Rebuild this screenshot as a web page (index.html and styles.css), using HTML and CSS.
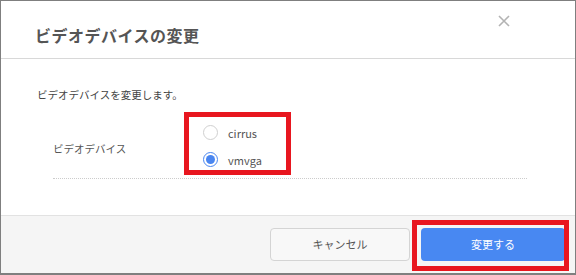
FILE: index.html
```html
<!DOCTYPE html>
<html lang="ja">
<head>
    <meta charset="UTF-8">
    <title>ビデオデバイスの変更</title>
    <link rel="stylesheet" href="styles.css">
</head>
<body>
    <div class="dialog">
        <div class="dialog-header">
            <h1>ビデオデバイスの変更</h1>
            <svg class="close" width="12" height="12" viewBox="0 0 12 12">
                <path d="M1 1 L11 11 M11 1 L1 11" stroke="#b3b3b3" stroke-width="1.6" fill="none"/>
            </svg>
        </div>

        <div class="dialog-body">
            <p class="description">ビデオデバイスを変更します。</p>
            <div class="form-row">
                <div class="form-label">ビデオデバイス</div>
                <div class="radio-group">
                    <label class="radio"><span class="radio-mark"></span>cirrus</label>
                    <label class="radio checked"><span class="radio-mark"></span>vmvga</label>
                    <div class="highlight highlight-radio"></div>
                </div>
            </div>
        </div>

        <div class="dialog-footer">
            <button class="btn btn-cancel">キャンセル</button>
            <div class="btn-wrap">
                <button class="btn btn-primary">変更する</button>
                <div class="highlight highlight-btn"></div>
            </div>
        </div>
    </div>
</body>
</html>
```

FILE: styles.css
```css
* {
    margin: 0;
    padding: 0;
    box-sizing: border-box;
    font-family: 'Noto Sans CJK JP', 'Noto Sans', sans-serif;
}

body {
    background: white;
}

.dialog {
    width: 576px;
    height: 275px;
    border: 1px solid #7f7f7f;
    border-bottom-width: 2px;
    display: flex;
    flex-direction: column;
    background: white;
}

.dialog-header {
    position: relative;
    height: 58px;
    border-bottom: 1px solid #d8d8d8;
    display: flex;
    align-items: center;
    padding-left: 34px;
    padding-top: 10px;
}

.dialog-header h1 {
    font-size: 16px;
    font-weight: bold;
    color: #555;
    letter-spacing: 0.5px;
}

.close {
    position: absolute;
    top: 14px;
    right: 65px;
}

.dialog-body {
    flex: 1;
    padding: 28px 48px 0 36px;
}

.description {
    font-size: 10.5px;
    line-height: 16px;
    color: #444;
}

.form-row {
    display: flex;
    align-items: center;
    margin: 15px 0 0 16px;
    height: 61px;
    border-bottom: 1px dotted #ccc;
}

.form-label {
    width: 150px;
    font-size: 10.5px;
    color: #555;
}

.radio-group {
    position: relative;
    display: flex;
    flex-direction: column;
    gap: 11px;
    padding-bottom: 4px;
}

.radio {
    display: flex;
    align-items: center;
    gap: 10px;
    height: 16px;
    font-size: 11px;
    color: #555;
}

.radio-mark {
    width: 15px;
    height: 15px;
    border: 1px solid #d0d0d0;
    border-radius: 50%;
    background: white;
    display: flex;
    align-items: center;
    justify-content: center;
}

.radio.checked .radio-mark {
    border-color: #4a86f0;
}

.radio.checked .radio-mark::after {
    content: '';
    width: 9px;
    height: 9px;
    border-radius: 50%;
    background: #4a86f0;
}

.dialog-footer {
    height: 58px;
    border-top: 1px solid #e2e2e2;
    background: #f5f5f5;
    display: flex;
    align-items: center;
    justify-content: flex-end;
    gap: 11px;
    padding: 0 10px 1px 0;
}

.btn {
    width: 144px;
    height: 33px;
    border-radius: 4px;
    font-size: 11px;
    cursor: pointer;
}

.btn-cancel {
    width: 140px;
    background: #f8f8f8;
    border: 1px solid #d4d4d4;
    color: #555;
}

.btn-primary {
    background: #4888f2;
    border: none;
    color: white;
}

.btn-wrap {
    position: relative;
    display: flex;
}

.highlight {
    position: absolute;
    border: 5px solid #e8161f;
    pointer-events: none;
}

.highlight-radio {
    left: -19px;
    top: -13px;
    width: 107px;
    height: 63px;
}

.highlight-btn {
    left: -9px;
    top: -8px;
    width: 157px;
    height: 51px;
}
```
